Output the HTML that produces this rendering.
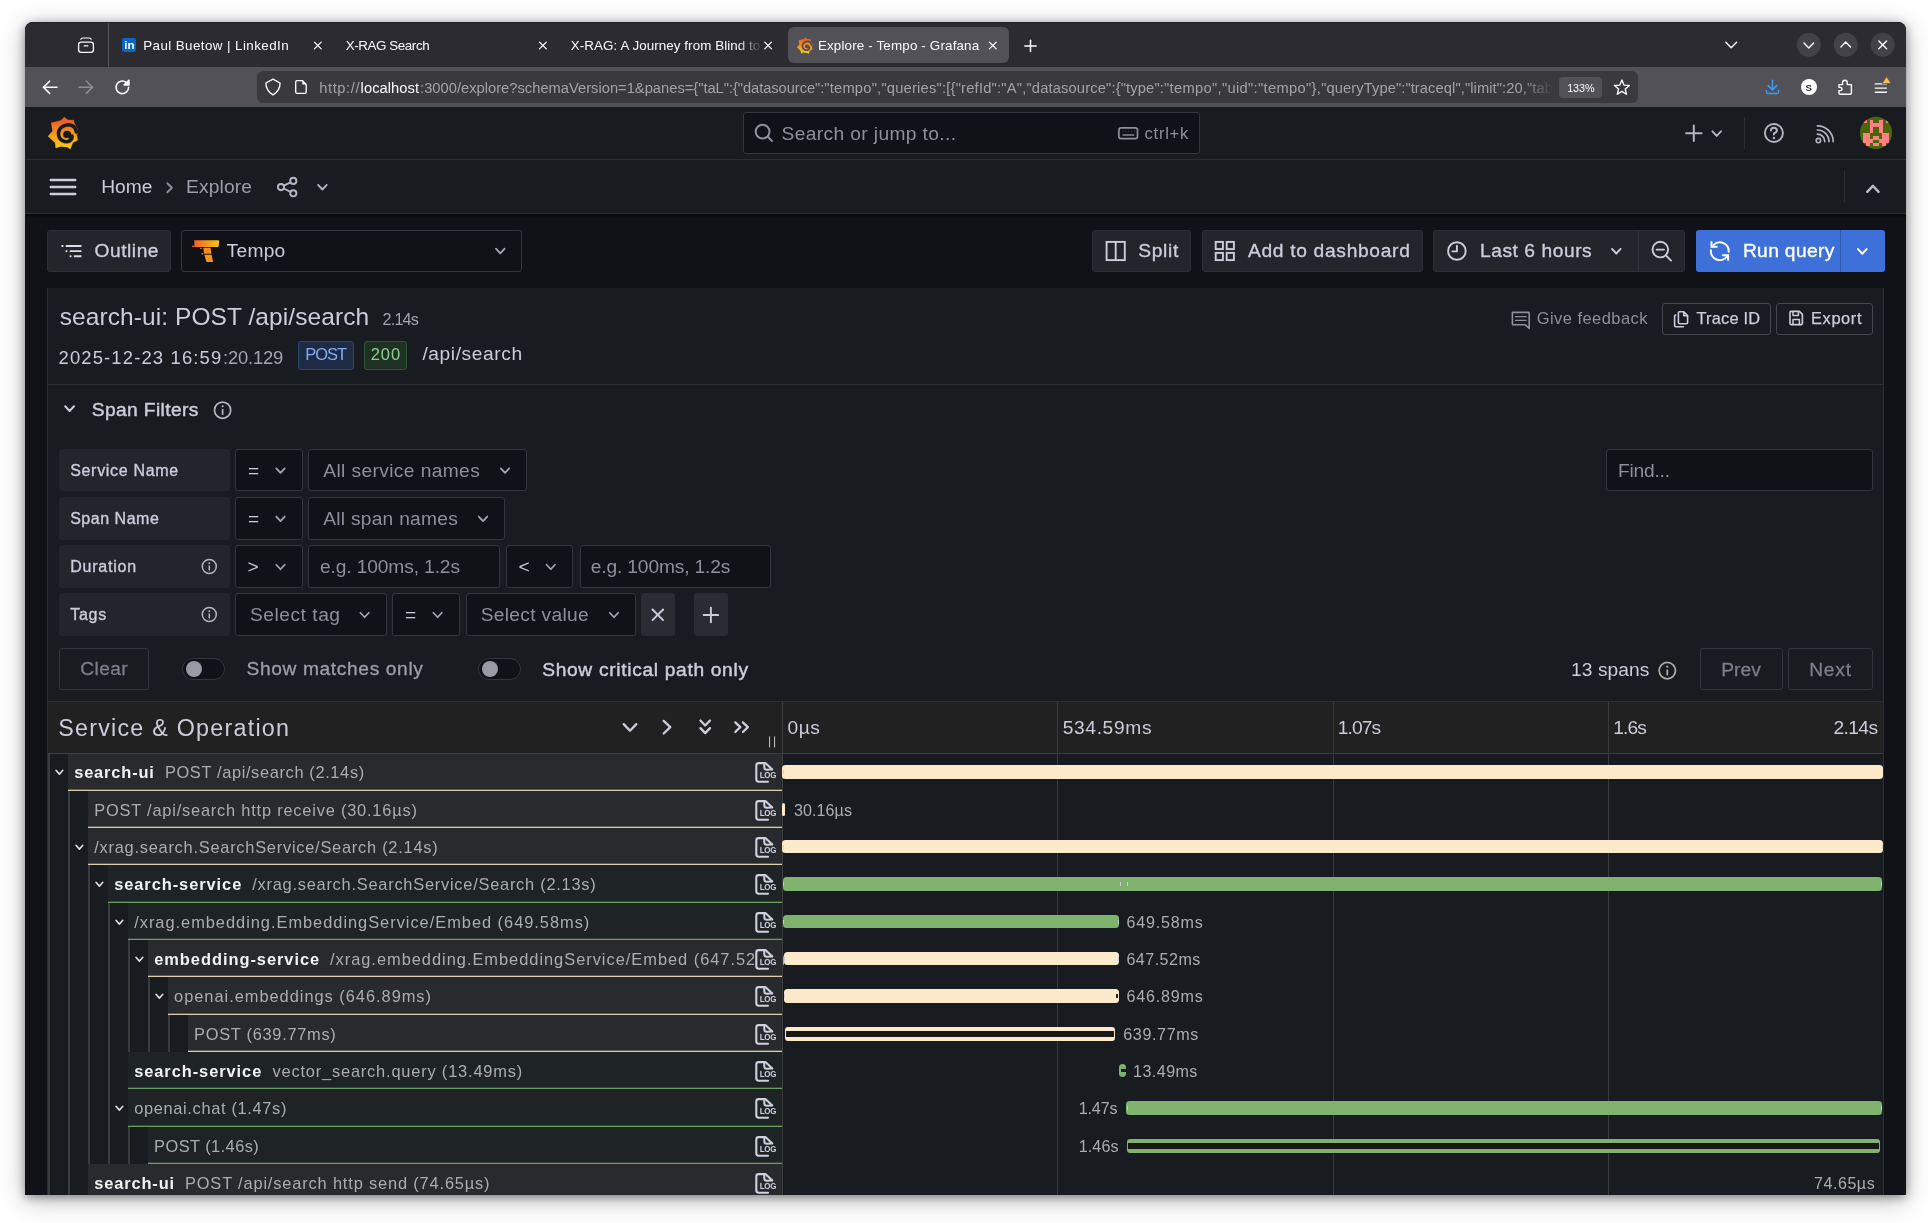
<!DOCTYPE html>
<html lang="en"><head><meta charset="utf-8"><title>Explore - Tempo - Grafana</title>
<style>
html,body{margin:0;padding:0;background:#fff;}
body{width:1931px;height:1223px;overflow:hidden;position:relative;font-family:"Liberation Sans", sans-serif;}
#win{position:absolute;left:25px;top:22px;width:1881px;height:1173px;border-radius:8px 8px 0 0;overflow:hidden;background:#111217;box-shadow:0 2px 10px rgba(0,0,0,0.38), 0 5px 26px rgba(0,0,0,0.28);}
#in{position:absolute;left:-25px;top:-22px;width:1931px;height:1223px;will-change:transform;}
#in div{position:absolute;box-sizing:border-box;}
#in span{position:absolute;white-space:pre;line-height:1;}
#ov{position:absolute;left:0;top:0;}
</style></head><body>
<div id="win"><div id="in">
<div style="left:25px;top:22px;width:1881px;height:45px;background:#2c2b32;"></div>
<div style="left:25px;top:22px;width:1881px;height:1px;background:#222126;"></div>
<div style="left:108px;top:23px;width:1px;height:44px;background:#55545b;"></div>
<div style="left:122px;top:38px;width:14px;height:14px;background:#0a66c2;border-radius:2px;"></div>
<span id="t0" style="top:40.07px;font-size:11.5px;color:#ffffff;left:124.2px;font-weight:700;letter-spacing:0.066px;">in</span>
<span id="t1" style="top:38.66px;font-size:13.4px;color:#fbfbfe;left:143.2px;letter-spacing:0.413px;">Paul Buetow | LinkedIn</span>
<span id="t2" style="top:38.66px;font-size:13.4px;color:#fbfbfe;left:345.8px;letter-spacing:-0.433px;">X-RAG Search</span>
<span id="t3" style="top:38.66px;font-size:13.4px;color:#fbfbfe;left:570.8px;letter-spacing:0.067px;">X-RAG: A Journey from Blind to</span>
<div style="left:738px;top:30px;width:24px;height:30px;background:linear-gradient(90deg,rgba(44,43,50,0),#2c2b32);"></div>
<div style="left:788px;top:27px;width:221px;height:36px;background:#525157;border-radius:6px;"></div>
<span id="t4" style="top:38.66px;font-size:13.4px;color:#fbfbfe;left:817.9px;letter-spacing:0.156px;">Explore - Tempo - Grafana</span>
<div style="left:25px;top:67px;width:1881px;height:40px;background:#525157;"></div>
<div style="left:257px;top:71px;width:1381px;height:32px;background:#3a3a3d;border-radius:6px;"></div>
<span id="t5" style="top:81.26px;font-size:14.7px;color:#a3a3a6;left:319.3px;letter-spacing:0.575px;">http://</span>
<span id="t6" style="top:81.26px;font-size:14.7px;color:#fbfbfe;left:360.6px;letter-spacing:0.054px;">localhost</span>
<span id="t7" style="top:81.26px;font-size:14.7px;color:#a3a3a6;left:420.1px;letter-spacing:0.015px;">:3000/explore?schemaVersion=1&amp;panes={</span>
<span id="t8" style="top:81.26px;font-size:14.7px;color:#a3a3a6;left:698.3px;letter-spacing:-0.051px;">"taL":{"datasource":</span>
<span id="t9" style="top:81.26px;font-size:14.7px;color:#a3a3a6;left:824.3px;letter-spacing:0.219px;">"tempo","queries":[{"refId":"A",</span>
<span id="t10" style="top:81.26px;font-size:14.7px;color:#a3a3a6;left:1026.5px;letter-spacing:0.150px;">"datasource":{"type":</span>
<span id="t11" style="top:81.26px;font-size:14.7px;color:#a3a3a6;left:1164px;letter-spacing:0.327px;">"tempo","uid":"tempo"},</span>
<span id="t12" style="top:81.26px;font-size:14.7px;color:#a3a3a6;left:1321.2px;letter-spacing:0.093px;">"queryType":"traceql","limit":20,"tab</span>
<div style="left:1520px;top:73px;width:34px;height:28px;background:linear-gradient(90deg,rgba(58,58,61,0),#3a3a3d);"></div>
<div style="left:1559px;top:77px;width:43px;height:20.6px;background:#525157;border-radius:4px;"></div>
<span id="t13" style="top:82.56px;font-size:10.8px;color:#fbfbfe;left:1567.2px;letter-spacing:-0.108px;">133%</span>
<div style="left:1800.9px;top:79.4px;width:15.8px;height:15.8px;background:#ffffff;border-radius:50%;"></div>
<span id="t14" style="top:82.57px;font-size:9.6px;color:#2b2a33;left:1805.6px;font-weight:700;">S</span>
<div style="left:25px;top:107px;width:1881px;height:53px;background:#181b1f;"></div>
<div style="left:25px;top:159px;width:1881px;height:1px;background:#2c2e34;"></div>
<div style="left:25px;top:160px;width:1881px;height:54px;background:#181b1f;"></div>
<div style="left:25px;top:213px;width:1881px;height:1px;background:#2c2e34;"></div>
<div style="left:25px;top:214px;width:1881px;height:981px;background:#111217;"></div>
<div style="left:25px;top:214px;width:1881px;height:5px;background:linear-gradient(180deg,rgba(0,0,0,0.55),rgba(0,0,0,0));"></div>
<div style="left:743px;top:112px;width:457px;height:41.5px;background:#111217;border:1px solid #34363d;border-radius:3px;"></div>
<span id="t15" style="top:123.55px;font-size:19.2px;color:#8e8f9b;left:781.6px;letter-spacing:0.372px;">Search or jump to...</span>
<span id="t16" style="top:124.83px;font-size:16.5px;color:#8e8f9b;left:1144.6px;letter-spacing:0.742px;">ctrl+k</span>
<div style="left:1744px;top:117px;width:1px;height:32px;background:#2c2e34;"></div>
<span id="t17" style="top:176.85px;font-size:19.2px;color:#ccccdc;left:101.2px;letter-spacing:0.037px;">Home</span>
<span id="t18" style="top:176.85px;font-size:19.2px;color:#9d9eab;left:186px;letter-spacing:0.156px;">Explore</span>
<div style="left:1844px;top:171px;width:1px;height:32px;background:#2c2e34;"></div>
<div style="left:47px;top:230px;width:124px;height:42px;background:#24252b;border:1px solid #2e2f36;border-radius:3px;"></div>
<span id="t19" style="top:240.85px;font-size:19.2px;color:#ccccdc;left:94.6px;-webkit-text-stroke:0.35px #ccccdc;letter-spacing:0.517px;">Outline</span>
<div style="left:181px;top:230px;width:341px;height:42px;background:#111217;border:1px solid #34363d;border-radius:3px;"></div>
<span id="t20" style="top:241.05px;font-size:19.2px;color:#ccccdc;left:226.6px;letter-spacing:0.277px;">Tempo</span>
<div style="left:1092px;top:230px;width:99px;height:42px;background:#24252b;border:1px solid #2e2f36;border-radius:3px;"></div>
<span id="t21" style="top:240.85px;font-size:19.2px;color:#ccccdc;left:1138.3px;-webkit-text-stroke:0.35px #ccccdc;letter-spacing:0.668px;">Split</span>
<div style="left:1202px;top:230px;width:221px;height:42px;background:#24252b;border:1px solid #2e2f36;border-radius:3px;"></div>
<span id="t22" style="top:240.85px;font-size:19.2px;color:#ccccdc;left:1247.9px;-webkit-text-stroke:0.35px #ccccdc;letter-spacing:0.700px;">Add to dashboard</span>
<div style="left:1433px;top:230px;width:252px;height:42px;background:#24252b;border:1px solid #2e2f36;border-radius:3px;"></div>
<div style="left:1638px;top:231px;width:1px;height:40px;background:#34353c;"></div>
<span id="t23" style="top:240.85px;font-size:19.2px;color:#ccccdc;left:1480px;-webkit-text-stroke:0.35px #ccccdc;letter-spacing:0.554px;">Last 6 hours</span>
<div style="left:1696px;top:230px;width:144px;height:42px;background:#3d71d9;border-radius:3px 0 0 3px;"></div>
<div style="left:1841px;top:230px;width:44px;height:42px;background:#3d71d9;border-radius:0 3px 3px 0;"></div>
<div style="left:1840px;top:230px;width:1px;height:42px;background:#2f5bb3;"></div>
<span id="t24" style="top:240.85px;font-size:19.2px;color:#ffffff;left:1742.9px;-webkit-text-stroke:0.35px #ffffff;letter-spacing:0.359px;">Run query</span>
<div style="left:47px;top:288px;width:1837px;height:907px;background:#181b1f;border-left:1px solid #2b2d32;border-right:1px solid #2b2d32;"></div>
<span id="t25" style="top:304.96px;font-size:24.5px;color:#ccccdc;left:59.7px;letter-spacing:0.081px;">search-ui: POST /api/search</span>
<span id="t26" style="top:311.49px;font-size:16.2px;color:#a3a4b1;left:382.6px;letter-spacing:-0.827px;">2.14s</span>
<span id="t27" style="top:348.62px;font-size:18.4px;color:#ccccdc;left:58.5px;letter-spacing:1.165px;">2025-12-23 16:59</span>
<span id="t28" style="top:348.62px;font-size:18.4px;color:#a3a4b1;left:223.1px;letter-spacing:-0.210px;">:20.129</span>
<div style="left:298px;top:341px;width:56px;height:29px;background:#1d2b45;border:1px solid #2c4878;border-radius:3px;"></div>
<span id="t29" style="top:345.93px;font-size:16.5px;color:#86adf0;left:305.3px;letter-spacing:-1.079px;">POST</span>
<div style="left:364px;top:341px;width:43px;height:29px;background:#1e3123;border:1px solid #2f5634;border-radius:3px;"></div>
<span id="t30" style="top:345.93px;font-size:16.5px;color:#8ccf8e;left:370.7px;letter-spacing:0.934px;">200</span>
<span id="t31" style="top:343.65px;font-size:19.2px;color:#ccccdc;left:422.4px;letter-spacing:0.584px;">/api/search</span>
<span id="t32" style="top:310.03px;font-size:16.5px;color:#8e8f9b;left:1536.7px;letter-spacing:0.443px;">Give feedback</span>
<div style="left:1662px;top:303px;width:109px;height:31.6px;background:transparent;border:1px solid #44464e;border-radius:3px;"></div>
<span id="t33" style="top:310.32px;font-size:16.4px;color:#ccccdc;left:1696.4px;-webkit-text-stroke:0.25px #ccccdc;letter-spacing:0.209px;">Trace ID</span>
<div style="left:1776px;top:303px;width:97px;height:31.6px;background:transparent;border:1px solid #44464e;border-radius:3px;"></div>
<span id="t34" style="top:310.32px;font-size:16.4px;color:#ccccdc;left:1811px;-webkit-text-stroke:0.25px #ccccdc;letter-spacing:0.625px;">Export</span>
<div style="left:48px;top:384px;width:1835px;height:1px;background:#2c2e34;"></div>
<span id="t35" style="top:399.85px;font-size:19.2px;color:#ccccdc;left:91.7px;-webkit-text-stroke:0.45px #ccccdc;letter-spacing:0.393px;">Span Filters</span>
<div style="left:59px;top:449px;width:171px;height:42.4px;background:#22252b;border-radius:3px;"></div>
<span id="t36" style="top:462.66px;font-size:16.0px;color:#ccccdc;left:70.2px;-webkit-text-stroke:0.35px #ccccdc;letter-spacing:0.683px;">Service Name</span>
<div style="left:235.4px;top:449px;width:67.3px;height:42.4px;background:#111217;border:1px solid #34363d;border-radius:3px;"></div>
<span id="t37" style="top:460.55px;font-size:19.2px;color:#ccccdc;left:248px;">=</span>
<div style="left:308.4px;top:449px;width:218.3px;height:42.4px;background:#111217;border:1px solid #34363d;border-radius:3px;"></div>
<span id="t38" style="top:460.55px;font-size:19.2px;color:#8e8f9b;left:323.2px;letter-spacing:0.390px;">All service names</span>
<div style="left:1606px;top:449px;width:267px;height:42.4px;background:#111217;border:1px solid #34363d;border-radius:3px;"></div>
<span id="t39" style="top:460.55px;font-size:19.2px;color:#8e8f9b;left:1618px;letter-spacing:-0.221px;">Find...</span>
<div style="left:59px;top:497.2px;width:171px;height:42.4px;background:#22252b;border-radius:3px;"></div>
<span id="t40" style="top:510.86px;font-size:16.0px;color:#ccccdc;left:70.2px;-webkit-text-stroke:0.35px #ccccdc;letter-spacing:0.512px;">Span Name</span>
<div style="left:235.4px;top:497.2px;width:67.3px;height:42.4px;background:#111217;border:1px solid #34363d;border-radius:3px;"></div>
<span id="t41" style="top:508.75px;font-size:19.2px;color:#ccccdc;left:248px;">=</span>
<div style="left:308.4px;top:497.2px;width:196.3px;height:42.4px;background:#111217;border:1px solid #34363d;border-radius:3px;"></div>
<span id="t42" style="top:508.75px;font-size:19.2px;color:#8e8f9b;left:323.2px;letter-spacing:0.262px;">All span names</span>
<div style="left:59px;top:545.4px;width:171px;height:42.4px;background:#22252b;border-radius:3px;"></div>
<span id="t43" style="top:559.06px;font-size:16.0px;color:#ccccdc;left:70.2px;-webkit-text-stroke:0.35px #ccccdc;letter-spacing:0.788px;">Duration</span>
<div style="left:235.4px;top:545.4px;width:67.3px;height:42.4px;background:#111217;border:1px solid #34363d;border-radius:3px;"></div>
<span id="t44" style="top:556.95px;font-size:19.2px;color:#ccccdc;left:247.6px;">&gt;</span>
<div style="left:308.4px;top:545.4px;width:191.4px;height:42.4px;background:#111217;border:1px solid #34363d;border-radius:3px;"></div>
<span id="t45" style="top:556.95px;font-size:19.2px;color:#8e8f9b;left:320px;letter-spacing:-0.124px;">e.g. 100ms, 1.2s</span>
<div style="left:506.2px;top:545.4px;width:66.7px;height:42.4px;background:#111217;border:1px solid #34363d;border-radius:3px;"></div>
<span id="t46" style="top:556.95px;font-size:19.2px;color:#ccccdc;left:518.6px;">&lt;</span>
<div style="left:579.5px;top:545.4px;width:191.4px;height:42.4px;background:#111217;border:1px solid #34363d;border-radius:3px;"></div>
<span id="t47" style="top:556.95px;font-size:19.2px;color:#8e8f9b;left:590.8px;letter-spacing:-0.157px;">e.g. 100ms, 1.2s</span>
<div style="left:59px;top:593.4px;width:171px;height:42.4px;background:#22252b;border-radius:3px;"></div>
<span id="t48" style="top:607.06px;font-size:16.0px;color:#ccccdc;left:70.2px;-webkit-text-stroke:0.35px #ccccdc;letter-spacing:0.734px;">Tags</span>
<div style="left:235.4px;top:593.4px;width:151.4px;height:42.4px;background:#111217;border:1px solid #34363d;border-radius:3px;"></div>
<span id="t49" style="top:604.95px;font-size:19.2px;color:#8e8f9b;left:250px;letter-spacing:0.517px;">Select tag</span>
<div style="left:392.1px;top:593.4px;width:67.6px;height:42.4px;background:#111217;border:1px solid #34363d;border-radius:3px;"></div>
<span id="t50" style="top:604.95px;font-size:19.2px;color:#ccccdc;left:405px;">=</span>
<div style="left:465.5px;top:593.4px;width:170.3px;height:42.4px;background:#111217;border:1px solid #34363d;border-radius:3px;"></div>
<span id="t51" style="top:604.95px;font-size:19.2px;color:#8e8f9b;left:480.7px;letter-spacing:0.315px;">Select value</span>
<div style="left:641px;top:593.4px;width:34.2px;height:42.4px;background:#2a2c33;border-radius:3px;"></div>
<div style="left:694.2px;top:593.4px;width:34.2px;height:42.4px;background:#2a2c33;border-radius:3px;"></div>
<div style="left:59.3px;top:648px;width:89.5px;height:41.6px;background:transparent;border:1px solid #33353c;border-radius:3px;"></div>
<span id="t52" style="top:659.25px;font-size:19.2px;color:#7d7e8a;left:80.3px;-webkit-text-stroke:0.3px #7d7e8a;letter-spacing:0.360px;">Clear</span>
<div style="left:182.3px;top:658.3px;width:42.6px;height:21.3px;background:#111217;border:1px solid #34363d;border-radius:11px;"></div>
<div style="left:185.60000000000002px;top:660.9px;width:16px;height:16px;background:#9a9aa6;border-radius:50%;"></div>
<span id="t53" style="top:659.05px;font-size:19.2px;color:#9b9ca8;left:246.5px;-webkit-text-stroke:0.35px #9b9ca8;letter-spacing:0.627px;">Show matches only</span>
<div style="left:478.2px;top:658.3px;width:42.6px;height:21.3px;background:#111217;border:1px solid #34363d;border-radius:11px;"></div>
<div style="left:481.5px;top:660.9px;width:16px;height:16px;background:#9a9aa6;border-radius:50%;"></div>
<span id="t54" style="top:659.65px;font-size:19.2px;color:#ccccdc;left:542.2px;-webkit-text-stroke:0.45px #ccccdc;letter-spacing:0.677px;">Show critical path only</span>
<span id="t55" style="top:659.95px;font-size:19.2px;color:#ccccdc;left:1571px;letter-spacing:0.075px;">13 spans</span>
<div style="left:1700.3px;top:648px;width:82.5px;height:41.6px;background:transparent;border:1px solid #33353c;border-radius:3px;"></div>
<span id="t56" style="top:659.75px;font-size:19.2px;color:#7d7e8a;left:1721.2px;-webkit-text-stroke:0.3px #7d7e8a;letter-spacing:0.049px;">Prev</span>
<div style="left:1788.3px;top:648px;width:84.7px;height:41.6px;background:transparent;border:1px solid #33353c;border-radius:3px;"></div>
<span id="t57" style="top:659.75px;font-size:19.2px;color:#7d7e8a;left:1809.2px;-webkit-text-stroke:0.3px #7d7e8a;letter-spacing:0.782px;">Next</span>
<div style="left:48px;top:701px;width:1835px;height:1px;background:#2c2e34;"></div>
<div style="left:48px;top:702px;width:1835px;height:51.5px;background:#212122;"></div>
<div style="left:48px;top:753px;width:1835px;height:1px;background:#3d3d3e;"></div>
<span id="t58" style="top:716.78px;font-size:23.3px;color:#ccccdc;left:58.2px;letter-spacing:1.240px;">Service &amp; Operation</span>
<span id="t59" style="top:717.65px;font-size:19.2px;color:#ccccdc;left:787.5px;letter-spacing:0.486px;">0µs</span>
<span id="t60" style="top:717.65px;font-size:19.2px;color:#ccccdc;left:1062.7px;letter-spacing:0.648px;">534.59ms</span>
<span id="t61" style="top:717.65px;font-size:19.2px;color:#ccccdc;left:1337.7px;letter-spacing:-0.863px;">1.07s</span>
<span id="t62" style="top:717.65px;font-size:19.2px;color:#ccccdc;left:1613.3px;letter-spacing:-0.894px;">1.6s</span>
<span id="t63" style="top:717.65px;font-size:19.2px;color:#ccccdc;left:1833.40px;letter-spacing:-0.588px;">2.14s</span>
<div style="left:68px;top:753px;width:714px;height:38px;background:#292a2d;"></div>
<span id="t64" style="top:764.02px;font-size:16.4px;color:#f2f2f2;left:74.2px;font-weight:700;letter-spacing:0.851px;">search-ui</span>
<span id="t65" style="top:764.02px;font-size:16.4px;color:#adadad;left:164.9px;letter-spacing:0.637px;">POST /api/search (2.14s)</span>
<div style="left:753.5px;top:753px;width:28.5px;height:38px;background:#292a2d;"></div>
<div style="left:68px;top:789px;width:714px;height:1px;background:#fceaca;opacity:0.26;"></div>
<div style="left:68px;top:790px;width:714px;height:1px;background:#fceaca;opacity:0.85;"></div>
<span id="t66" style="top:771.83px;font-size:8.0px;color:#cfd0e0;left:759.8px;font-weight:700;letter-spacing:-0.372px;transform:scaleY(1.1);transform-origin:0 85%;">LOG</span>
<div style="left:48px;top:753px;width:2px;height:38px;background:#3b3b3b;"></div>
<div style="left:88px;top:791px;width:694px;height:37px;background:#292a2d;"></div>
<span id="t67" style="top:802.02px;font-size:16.4px;color:#adadad;left:94.2px;letter-spacing:0.795px;">POST /api/search http receive (30.16µs)</span>
<div style="left:753.5px;top:791px;width:28.5px;height:37px;background:#292a2d;"></div>
<div style="left:88px;top:826px;width:694px;height:1px;background:#fceaca;opacity:0.26;"></div>
<div style="left:88px;top:827px;width:694px;height:1px;background:#fceaca;opacity:0.85;"></div>
<span id="t68" style="top:809.83px;font-size:8.0px;color:#cfd0e0;left:759.8px;font-weight:700;letter-spacing:-0.372px;transform:scaleY(1.1);transform-origin:0 85%;">LOG</span>
<div style="left:48px;top:791px;width:2px;height:37px;background:#3b3b3b;"></div>
<div style="left:68px;top:791px;width:2px;height:37px;background:#3b3b3b;"></div>
<div style="left:88px;top:828px;width:694px;height:37px;background:#292a2d;"></div>
<span id="t69" style="top:839.02px;font-size:16.4px;color:#adadad;left:94.2px;letter-spacing:0.753px;">/xrag.search.SearchService/Search (2.14s)</span>
<div style="left:753.5px;top:828px;width:28.5px;height:37px;background:#292a2d;"></div>
<div style="left:88px;top:863px;width:694px;height:1px;background:#fceaca;opacity:0.26;"></div>
<div style="left:88px;top:864px;width:694px;height:1px;background:#fceaca;opacity:0.85;"></div>
<span id="t70" style="top:846.83px;font-size:8.0px;color:#cfd0e0;left:759.8px;font-weight:700;letter-spacing:-0.372px;transform:scaleY(1.1);transform-origin:0 85%;">LOG</span>
<div style="left:48px;top:828px;width:2px;height:37px;background:#3b3b3b;"></div>
<div style="left:68px;top:828px;width:2px;height:37px;background:#3b3b3b;"></div>
<div style="left:108px;top:865px;width:674px;height:38px;background:#1e2326;"></div>
<span id="t71" style="top:876.02px;font-size:16.4px;color:#f2f2f2;left:114.2px;font-weight:700;letter-spacing:0.944px;">search-service</span>
<span id="t72" style="top:876.02px;font-size:16.4px;color:#adadad;left:252.2px;letter-spacing:0.755px;">/xrag.search.SearchService/Search (2.13s)</span>
<div style="left:753.5px;top:865px;width:28.5px;height:38px;background:#1e2326;"></div>
<div style="left:108px;top:901px;width:674px;height:1px;background:#7eb26d;opacity:0.26;"></div>
<div style="left:108px;top:902px;width:674px;height:1px;background:#7eb26d;opacity:0.85;"></div>
<span id="t73" style="top:883.83px;font-size:8.0px;color:#cfd0e0;left:759.8px;font-weight:700;letter-spacing:-0.372px;transform:scaleY(1.1);transform-origin:0 85%;">LOG</span>
<div style="left:48px;top:865px;width:2px;height:38px;background:#3b3b3b;"></div>
<div style="left:68px;top:865px;width:2px;height:38px;background:#3b3b3b;"></div>
<div style="left:88px;top:865px;width:2px;height:38px;background:#3b3b3b;"></div>
<div style="left:128px;top:903px;width:654px;height:37px;background:#1e2326;"></div>
<span id="t74" style="top:914.02px;font-size:16.4px;color:#adadad;left:134.2px;letter-spacing:0.978px;">/xrag.embedding.EmbeddingService/Embed (649.58ms)</span>
<div style="left:753.5px;top:903px;width:28.5px;height:37px;background:#1e2326;"></div>
<div style="left:128px;top:938px;width:654px;height:1px;background:#7eb26d;opacity:0.26;"></div>
<div style="left:128px;top:939px;width:654px;height:1px;background:#7eb26d;opacity:0.85;"></div>
<span id="t75" style="top:921.83px;font-size:8.0px;color:#cfd0e0;left:759.8px;font-weight:700;letter-spacing:-0.372px;transform:scaleY(1.1);transform-origin:0 85%;">LOG</span>
<div style="left:48px;top:903px;width:2px;height:37px;background:#3b3b3b;"></div>
<div style="left:68px;top:903px;width:2px;height:37px;background:#3b3b3b;"></div>
<div style="left:88px;top:903px;width:2px;height:37px;background:#3b3b3b;"></div>
<div style="left:108px;top:903px;width:2px;height:37px;background:#3b3b3b;"></div>
<div style="left:148px;top:940px;width:634px;height:37px;background:#292a2d;"></div>
<span id="t76" style="top:951.02px;font-size:16.4px;color:#f2f2f2;left:154.2px;font-weight:700;letter-spacing:0.976px;">embedding-service</span>
<span id="t77" style="top:951.02px;font-size:16.4px;color:#adadad;left:330px;letter-spacing:0.986px;">/xrag.embedding.EmbeddingService/Embed (647.52ms)</span>
<div style="left:753.5px;top:940px;width:28.5px;height:37px;background:#292a2d;"></div>
<div style="left:148px;top:975px;width:634px;height:1px;background:#fceaca;opacity:0.26;"></div>
<div style="left:148px;top:976px;width:634px;height:1px;background:#fceaca;opacity:0.85;"></div>
<span id="t78" style="top:958.83px;font-size:8.0px;color:#cfd0e0;left:759.8px;font-weight:700;letter-spacing:-0.372px;transform:scaleY(1.1);transform-origin:0 85%;">LOG</span>
<div style="left:48px;top:940px;width:2px;height:37px;background:#3b3b3b;"></div>
<div style="left:68px;top:940px;width:2px;height:37px;background:#3b3b3b;"></div>
<div style="left:88px;top:940px;width:2px;height:37px;background:#3b3b3b;"></div>
<div style="left:108px;top:940px;width:2px;height:37px;background:#3b3b3b;"></div>
<div style="left:128px;top:940px;width:2px;height:37px;background:#3b3b3b;"></div>
<div style="left:168px;top:977px;width:614px;height:38px;background:#292a2d;"></div>
<span id="t79" style="top:988.02px;font-size:16.4px;color:#adadad;left:174.1px;letter-spacing:0.977px;">openai.embeddings (646.89ms)</span>
<div style="left:753.5px;top:977px;width:28.5px;height:38px;background:#292a2d;"></div>
<div style="left:168px;top:1013px;width:614px;height:1px;background:#fceaca;opacity:0.26;"></div>
<div style="left:168px;top:1014px;width:614px;height:1px;background:#fceaca;opacity:0.85;"></div>
<span id="t80" style="top:995.83px;font-size:8.0px;color:#cfd0e0;left:759.8px;font-weight:700;letter-spacing:-0.372px;transform:scaleY(1.1);transform-origin:0 85%;">LOG</span>
<div style="left:48px;top:977px;width:2px;height:38px;background:#3b3b3b;"></div>
<div style="left:68px;top:977px;width:2px;height:38px;background:#3b3b3b;"></div>
<div style="left:88px;top:977px;width:2px;height:38px;background:#3b3b3b;"></div>
<div style="left:108px;top:977px;width:2px;height:38px;background:#3b3b3b;"></div>
<div style="left:128px;top:977px;width:2px;height:38px;background:#3b3b3b;"></div>
<div style="left:148px;top:977px;width:2px;height:38px;background:#3b3b3b;"></div>
<div style="left:188px;top:1015px;width:594px;height:37px;background:#292a2d;"></div>
<span id="t81" style="top:1026.02px;font-size:16.4px;color:#adadad;left:194.1px;letter-spacing:0.708px;">POST (639.77ms)</span>
<div style="left:753.5px;top:1015px;width:28.5px;height:37px;background:#292a2d;"></div>
<div style="left:188px;top:1050px;width:594px;height:1px;background:#fceaca;opacity:0.26;"></div>
<div style="left:188px;top:1051px;width:594px;height:1px;background:#fceaca;opacity:0.85;"></div>
<span id="t82" style="top:1033.83px;font-size:8.0px;color:#cfd0e0;left:759.8px;font-weight:700;letter-spacing:-0.372px;transform:scaleY(1.1);transform-origin:0 85%;">LOG</span>
<div style="left:48px;top:1015px;width:2px;height:37px;background:#3b3b3b;"></div>
<div style="left:68px;top:1015px;width:2px;height:37px;background:#3b3b3b;"></div>
<div style="left:88px;top:1015px;width:2px;height:37px;background:#3b3b3b;"></div>
<div style="left:108px;top:1015px;width:2px;height:37px;background:#3b3b3b;"></div>
<div style="left:128px;top:1015px;width:2px;height:37px;background:#3b3b3b;"></div>
<div style="left:148px;top:1015px;width:2px;height:37px;background:#3b3b3b;"></div>
<div style="left:168px;top:1015px;width:2px;height:37px;background:#3b3b3b;"></div>
<div style="left:128px;top:1052px;width:654px;height:37px;background:#1e2326;"></div>
<span id="t83" style="top:1063.02px;font-size:16.4px;color:#f2f2f2;left:134.2px;font-weight:700;letter-spacing:0.944px;">search-service</span>
<span id="t84" style="top:1063.02px;font-size:16.4px;color:#adadad;left:272.5px;letter-spacing:0.816px;">vector_search.query (13.49ms)</span>
<div style="left:753.5px;top:1052px;width:28.5px;height:37px;background:#1e2326;"></div>
<div style="left:128px;top:1087px;width:654px;height:1px;background:#7eb26d;opacity:0.26;"></div>
<div style="left:128px;top:1088px;width:654px;height:1px;background:#7eb26d;opacity:0.85;"></div>
<span id="t85" style="top:1070.83px;font-size:8.0px;color:#cfd0e0;left:759.8px;font-weight:700;letter-spacing:-0.372px;transform:scaleY(1.1);transform-origin:0 85%;">LOG</span>
<div style="left:48px;top:1052px;width:2px;height:37px;background:#3b3b3b;"></div>
<div style="left:68px;top:1052px;width:2px;height:37px;background:#3b3b3b;"></div>
<div style="left:88px;top:1052px;width:2px;height:37px;background:#3b3b3b;"></div>
<div style="left:108px;top:1052px;width:2px;height:37px;background:#3b3b3b;"></div>
<div style="left:128px;top:1089px;width:654px;height:38px;background:#1e2326;"></div>
<span id="t86" style="top:1100.02px;font-size:16.4px;color:#adadad;left:134.2px;letter-spacing:0.660px;">openai.chat (1.47s)</span>
<div style="left:753.5px;top:1089px;width:28.5px;height:38px;background:#1e2326;"></div>
<div style="left:128px;top:1125px;width:654px;height:1px;background:#7eb26d;opacity:0.26;"></div>
<div style="left:128px;top:1126px;width:654px;height:1px;background:#7eb26d;opacity:0.85;"></div>
<span id="t87" style="top:1107.83px;font-size:8.0px;color:#cfd0e0;left:759.8px;font-weight:700;letter-spacing:-0.372px;transform:scaleY(1.1);transform-origin:0 85%;">LOG</span>
<div style="left:48px;top:1089px;width:2px;height:38px;background:#3b3b3b;"></div>
<div style="left:68px;top:1089px;width:2px;height:38px;background:#3b3b3b;"></div>
<div style="left:88px;top:1089px;width:2px;height:38px;background:#3b3b3b;"></div>
<div style="left:108px;top:1089px;width:2px;height:38px;background:#3b3b3b;"></div>
<div style="left:148px;top:1127px;width:634px;height:37px;background:#1e2326;"></div>
<span id="t88" style="top:1138.02px;font-size:16.4px;color:#adadad;left:154.1px;letter-spacing:0.436px;">POST (1.46s)</span>
<div style="left:753.5px;top:1127px;width:28.5px;height:37px;background:#1e2326;"></div>
<div style="left:148px;top:1162px;width:634px;height:1px;background:#7eb26d;opacity:0.26;"></div>
<div style="left:148px;top:1163px;width:634px;height:1px;background:#7eb26d;opacity:0.85;"></div>
<span id="t89" style="top:1145.83px;font-size:8.0px;color:#cfd0e0;left:759.8px;font-weight:700;letter-spacing:-0.372px;transform:scaleY(1.1);transform-origin:0 85%;">LOG</span>
<div style="left:48px;top:1127px;width:2px;height:37px;background:#3b3b3b;"></div>
<div style="left:68px;top:1127px;width:2px;height:37px;background:#3b3b3b;"></div>
<div style="left:88px;top:1127px;width:2px;height:37px;background:#3b3b3b;"></div>
<div style="left:108px;top:1127px;width:2px;height:37px;background:#3b3b3b;"></div>
<div style="left:128px;top:1127px;width:2px;height:37px;background:#3b3b3b;"></div>
<div style="left:88px;top:1164px;width:694px;height:37px;background:#292a2d;"></div>
<span id="t90" style="top:1175.02px;font-size:16.4px;color:#f2f2f2;left:94.2px;font-weight:700;letter-spacing:0.876px;">search-ui</span>
<span id="t91" style="top:1175.02px;font-size:16.4px;color:#adadad;left:185px;letter-spacing:0.840px;">POST /api/search http send (74.65µs)</span>
<div style="left:753.5px;top:1164px;width:28.5px;height:37px;background:#292a2d;"></div>
<div style="left:88px;top:1199px;width:694px;height:1px;background:#fceaca;opacity:0.26;"></div>
<div style="left:88px;top:1200px;width:694px;height:1px;background:#fceaca;opacity:0.85;"></div>
<span id="t92" style="top:1182.83px;font-size:8.0px;color:#cfd0e0;left:759.8px;font-weight:700;letter-spacing:-0.372px;transform:scaleY(1.1);transform-origin:0 85%;">LOG</span>
<div style="left:48px;top:1164px;width:2px;height:37px;background:#3b3b3b;"></div>
<div style="left:68px;top:1164px;width:2px;height:37px;background:#3b3b3b;"></div>
<div style="left:48px;top:753px;width:1835px;height:1px;background:#3d3d3e;"></div>
<div style="left:1057.3px;top:702px;width:1px;height:493px;background:#3a3a3b;"></div>
<div style="left:1332.6px;top:702px;width:1px;height:493px;background:#3a3a3b;"></div>
<div style="left:1608.3px;top:702px;width:1px;height:493px;background:#3a3a3b;"></div>
<div style="left:782px;top:702px;width:1px;height:493px;background:#3d3d3e;"></div>
<div style="left:782.3px;top:765px;width:1100.9px;height:14px;background:#fceaca;border-radius:3.5px;"></div>
<div style="left:782.6px;top:770px;width:1.1px;height:4px;background:#c9cbe0;"></div>
<div style="left:782.3px;top:803px;width:2.7000000000000455px;height:13px;background:#fceaca;border-radius:3.5px;"></div>
<span id="t93" style="top:802.17px;font-size:16.1px;color:#adadad;left:793.9px;letter-spacing:0.084px;">30.16µs</span>
<div style="left:782.3px;top:840px;width:1100.5px;height:13px;background:#fceaca;border-radius:3.5px;"></div>
<div style="left:782.6px;top:845px;width:1.1px;height:4px;background:#c9cbe0;"></div>
<div style="left:1881.6px;top:845px;width:1.1px;height:4px;background:#c9cbe0;"></div>
<div style="left:783.2px;top:877px;width:1099.0px;height:14px;background:#7eb26d;border-radius:3.5px;"></div>
<div style="left:783.4px;top:882px;width:1.1px;height:4px;background:#c9cbe0;"></div>
<div style="left:1119.6px;top:882px;width:1.1px;height:4px;background:#c9cbe0;"></div>
<div style="left:1126.8px;top:882px;width:1.1px;height:4px;background:#c9cbe0;"></div>
<div style="left:1881.4px;top:882px;width:1.1px;height:4px;background:#c9cbe0;"></div>
<div style="left:783.2px;top:915px;width:335.79999999999995px;height:13px;background:#7eb26d;border-radius:3.5px;"></div>
<div style="left:783.4px;top:920px;width:1.1px;height:4px;background:#c9cbe0;"></div>
<div style="left:1118px;top:920px;width:1.1px;height:4px;background:#c9cbe0;"></div>
<span id="t94" style="top:914.17px;font-size:16.1px;color:#adadad;left:1126.4px;letter-spacing:0.816px;">649.58ms</span>
<div style="left:784.2px;top:952px;width:334.79999999999995px;height:13px;background:#fceaca;border-radius:3.5px;"></div>
<div style="left:784.4px;top:957px;width:1.1px;height:4px;background:#c9cbe0;"></div>
<div style="left:1118px;top:957px;width:1.1px;height:4px;background:#c9cbe0;"></div>
<span id="t95" style="top:951.17px;font-size:16.1px;color:#adadad;left:1126.4px;letter-spacing:0.473px;">647.52ms</span>
<div style="left:784.2px;top:989px;width:334.79999999999995px;height:14px;background:#fceaca;border-radius:3.5px;"></div>
<div style="left:784.4px;top:994px;width:1.1px;height:4px;background:#c9cbe0;"></div>
<span id="t96" style="top:988.17px;font-size:16.1px;color:#adadad;left:1126.4px;letter-spacing:0.816px;">646.89ms</span>
<div style="left:1116.4px;top:994px;width:1.3px;height:4px;background:#20242c;"></div>
<div style="left:785.2px;top:1027px;width:330.0px;height:13.5px;background:#181818;border-radius:3px;border:solid #fceaca;border-width:4.4px 1.2px 4.4px 1.2px;"></div>
<span id="t97" style="top:1026.17px;font-size:16.1px;color:#adadad;left:1123.2px;letter-spacing:0.645px;">639.77ms</span>
<div style="left:1119.2px;top:1064px;width:7.0px;height:13px;background:#7eb26d;border-radius:3.5px;"></div>
<div style="left:1121.4px;top:1069px;width:4.2px;height:3.4px;background:#1b1e22;"></div>
<span id="t98" style="top:1063.17px;font-size:16.1px;color:#adadad;left:1133.1px;letter-spacing:0.428px;">13.49ms</span>
<span id="t99" style="top:1100.17px;font-size:16.1px;color:#adadad;left:1078.7px;letter-spacing:-0.119px;">1.47s</span>
<div style="left:1126px;top:1101px;width:755.8px;height:14px;background:#7eb26d;border-radius:3.5px;"></div>
<div style="left:1126.6px;top:1106px;width:1.1px;height:4px;background:#c9cbe0;"></div>
<div style="left:1880.8px;top:1106px;width:1.1px;height:4px;background:#c9cbe0;"></div>
<span id="t100" style="top:1138.17px;font-size:16.1px;color:#adadad;left:1078.7px;letter-spacing:0.106px;">1.46s</span>
<div style="left:1127px;top:1139px;width:753px;height:13.5px;background:#181818;border-radius:3px;border:solid #7eb26d;border-width:4.4px 1.2px 4.4px 1.2px;"></div>
<span id="t101" style="top:1175.17px;font-size:16.1px;color:#adadad;left:1814.00px;letter-spacing:0.518px;">74.65µs</span>
<svg id="ov" width="1931" height="1223" viewBox="0 0 1931 1223">
<defs>
<linearGradient id="gg" gradientUnits="userSpaceOnUse" x1="0" y1="39.5" x2="0" y2="7"><stop offset="0" stop-color="#fbd016"/><stop offset="0.45" stop-color="#f79a1c"/><stop offset="1" stop-color="#ef4e28"/></linearGradient>
<linearGradient id="tg" x1="0" y1="0" x2="1" y2="0"><stop offset="0" stop-color="#f15f2a"/><stop offset="1" stop-color="#fbc80e"/></linearGradient>
<clipPath id="avc"><circle cx="1876" cy="132.9" r="16.1"/></clipPath>
</defs>
<rect x="78.6" y="42.2" width="14.8" height="10.2" rx="2.6" fill="none" stroke="#fbfbfe" stroke-width="1.3"/>
<path d="M80.8 39.2 Q81.2 38 82.6 38 L89.4 38 Q90.8 38 91.2 39.2" fill="none" stroke="#fbfbfe" stroke-width="1.2" stroke-linecap="round" stroke-linejoin="round" />
<line x1="84.2" y1="45.8" x2="87.8" y2="45.8" stroke="#fbfbfe" stroke-width="1.3" stroke-linecap="round"/>
<line x1="314.40000000000003" y1="42.1" x2="321.2" y2="48.9" stroke="#fbfbfe" stroke-width="1.3" stroke-linecap="round"/>
<line x1="314.40000000000003" y1="48.9" x2="321.2" y2="42.1" stroke="#fbfbfe" stroke-width="1.3" stroke-linecap="round"/>
<line x1="539.5" y1="42.1" x2="546.3" y2="48.9" stroke="#fbfbfe" stroke-width="1.3" stroke-linecap="round"/>
<line x1="539.5" y1="48.9" x2="546.3" y2="42.1" stroke="#fbfbfe" stroke-width="1.3" stroke-linecap="round"/>
<line x1="764.7" y1="42.1" x2="771.5" y2="48.9" stroke="#fbfbfe" stroke-width="1.3" stroke-linecap="round"/>
<line x1="764.7" y1="48.9" x2="771.5" y2="42.1" stroke="#fbfbfe" stroke-width="1.3" stroke-linecap="round"/>
<line x1="989.4" y1="42.1" x2="996.1999999999999" y2="48.9" stroke="#fbfbfe" stroke-width="1.3" stroke-linecap="round"/>
<line x1="989.4" y1="48.9" x2="996.1999999999999" y2="42.1" stroke="#fbfbfe" stroke-width="1.3" stroke-linecap="round"/>
<line x1="1024.8" y1="45.9" x2="1036.2" y2="45.9" stroke="#fbfbfe" stroke-width="1.5" stroke-linecap="round"/>
<line x1="1030.5" y1="40.199999999999996" x2="1030.5" y2="51.6" stroke="#fbfbfe" stroke-width="1.5" stroke-linecap="round"/>
<path d="M1725.8 42.2 L1731.2 47.8 L1736.6000000000001 42.2" fill="none" stroke="#fbfbfe" stroke-width="1.4" stroke-linecap="round" stroke-linejoin="round"/>
<circle cx="1808.8" cy="44.8" r="12" fill="#434249"/>
<circle cx="1845.7" cy="44.8" r="12" fill="#434249"/>
<circle cx="1882.7" cy="44.8" r="12" fill="#434249"/>
<path d="M1804.0 42.9 L1808.8 47.9 L1813.6 42.9" fill="none" stroke="#fbfbfe" stroke-width="1.4" stroke-linecap="round" stroke-linejoin="round"/>
<path d="M1840.9 47.1 L1845.7 42.1 L1850.5 47.1" fill="none" stroke="#fbfbfe" stroke-width="1.4" stroke-linecap="round" stroke-linejoin="round"/>
<line x1="1878.8" y1="40.9" x2="1886.6000000000001" y2="48.699999999999996" stroke="#fbfbfe" stroke-width="1.4" stroke-linecap="round"/>
<line x1="1878.8" y1="48.699999999999996" x2="1886.6000000000001" y2="40.9" stroke="#fbfbfe" stroke-width="1.4" stroke-linecap="round"/>
<line x1="43.6" y1="87.3" x2="57" y2="87.3" stroke="#fbfbfe" stroke-width="1.6" stroke-linecap="round"/>
<path d="M49.6 81.2 L43.5 87.3 L49.6 93.4" fill="none" stroke="#fbfbfe" stroke-width="1.6" stroke-linecap="round" stroke-linejoin="round"/>
<line x1="79" y1="87.3" x2="92.4" y2="87.3" stroke="#908f95" stroke-width="1.6" stroke-linecap="round"/>
<path d="M86.4 81.2 L92.5 87.3 L86.4 93.4" fill="none" stroke="#908f95" stroke-width="1.6" stroke-linecap="round" stroke-linejoin="round"/>
<path d="M128.6 87.3 A6.3 6.3 0 1 1 126.2 82.4" fill="none" stroke="#fbfbfe" stroke-width="1.6" stroke-linecap="round" stroke-linejoin="round" />
<path d="M128.9 80.2 L128.9 84.9 L124.2 84.9 Z" fill="#fbfbfe" stroke="#fbfbfe" stroke-width="1.6" stroke-linecap="round" stroke-linejoin="round"/>
<path d="M272.98 79.1 L280.05 83 Q280.2 90.6 272.98 94.95 Q265.8 90.6 265.95 83 Z" fill="none" stroke="#fbfbfe" stroke-width="1.35" stroke-linecap="round" stroke-linejoin="round" />
<path d="M297 80.6 L302.3 80.6 L306.2 84.5 L306.2 92 Q306.2 93.3 304.9 93.3 L297 93.3 Q295.7 93.3 295.7 92 L295.7 81.9 Q295.7 80.6 297 80.6 Z" fill="none" stroke="#fbfbfe" stroke-width="1.35" stroke-linecap="round" stroke-linejoin="round" />
<path d="M302.3 80.6 L302.3 84.5 L306.2 84.5 Z" fill="#fbfbfe"/>
<path d="M1621.9 80.0 L1623.96 85.07 L1629.41 85.46 L1625.23 88.98 L1626.54 94.29 L1621.9 91.4 L1617.26 94.29 L1618.57 88.98 L1614.39 85.46 L1619.84 85.07 Z" fill="none" stroke="#fbfbfe" stroke-width="1.35" stroke-linecap="round" stroke-linejoin="round"/>
<line x1="1772.5" y1="80.2" x2="1772.5" y2="89.6" stroke="#3a9bf7" stroke-width="1.5" stroke-linecap="round"/>
<path d="M1768.2 85.6 L1772.5 89.9 L1776.8 85.6" fill="none" stroke="#3a9bf7" stroke-width="1.5" stroke-linecap="round" stroke-linejoin="round"/>
<path d="M1766.4 90.4 L1766.4 92 Q1766.4 93.4 1767.8 93.4 L1777.2 93.4 Q1778.6 93.4 1778.6 92 L1778.6 90.4" fill="none" stroke="#3a9bf7" stroke-width="1.5" stroke-linecap="round" stroke-linejoin="round" />
<path d="M1839 84.6 L1842.6 84.6 L1842.6 82.6 Q1842.6 80.3 1844.9 80.3 Q1847.2 80.3 1847.2 82.6 L1847.2 84.6 L1851.4 84.6 L1851.4 93 Q1851.4 94.2 1850.2 94.2 L1840.2 94.2 Q1839 94.2 1839 93 L1839 90.6 Q1842 90.8 1842 88.9 Q1842 87.2 1839 87.3 Z" fill="none" stroke="#fbfbfe" stroke-width="1.4" stroke-linecap="round" stroke-linejoin="round" />
<line x1="1875.2" y1="83.9" x2="1886.4" y2="83.9" stroke="#fbfbfe" stroke-width="1.4" stroke-linecap="round"/>
<line x1="1875.2" y1="88.1" x2="1886.4" y2="88.1" stroke="#fbfbfe" stroke-width="1.4" stroke-linecap="round"/>
<line x1="1875.2" y1="92.3" x2="1886.4" y2="92.3" stroke="#fbfbfe" stroke-width="1.4" stroke-linecap="round"/>
<path d="M1886.6 76.6 L1891.2 83.6 L1882 83.6 Z" fill="#ffbd4f" stroke="#525157" stroke-width="0.8"/>
<g transform="translate(40 110) scale(1)"><path d="M24.27 6.96 L27.65 9.86 L33.86 10.23 L34.54 14.00 L37.06 18.43 L38.11 22.87 L36.68 24.83 L37.74 30.10 L32.81 32.66 L30.17 39.20 L27.92 37.17 L20.50 36.42 L15.73 37.92 L15.12 32.81 L7.98 26.34 L12.60 21.07 L11.21 12.72 L18.06 11.29 L21.07 10.23 Z" fill="url(#gg)" stroke="url(#gg)" stroke-width="0.3" stroke-linejoin="round"/><path d="M36.42 22.01 C36.21 21.41 35.73 19.41 35.18 18.43 C34.63 17.46 33.95 16.75 33.11 16.18 C32.26 15.60 31.20 15.16 30.10 14.97 C29.00 14.79 27.78 14.79 26.52 15.05 C25.27 15.31 23.70 15.86 22.57 16.55 C21.44 17.24 20.43 18.06 19.75 19.19 C19.07 20.32 18.54 21.88 18.51 23.33 C18.48 24.77 18.89 26.62 19.56 27.84 C20.24 29.06 21.44 30.02 22.57 30.66 C23.70 31.30 25.14 31.65 26.34 31.68 C27.53 31.71 28.81 31.36 29.72 30.85 C30.63 30.34 31.41 29.41 31.79 28.59 C32.17 27.78 31.95 26.40 31.98 25.96" fill="none" stroke="#181b1f" stroke-width="3.6" stroke-linecap="round"/><circle cx="27.16" cy="24.76" r="4.1" fill="#181b1f"/><path d="M28.22 28.29 L31.60 26.34" stroke="#181b1f" stroke-width="2.6" stroke-linecap="round"/><path d="M28.03 28.52 C27.68 28.61 26.62 29.09 25.96 29.04 C25.30 28.99 24.39 28.35 24.08 28.22" fill="none" stroke="url(#gg)" stroke-width="1.5" stroke-linecap="round"/></g>
<g transform="translate(792.9326732673268 33.7990099009901) scale(0.5148514851485149)"><path d="M24.27 6.96 L27.65 9.86 L33.86 10.23 L34.54 14.00 L37.06 18.43 L38.11 22.87 L36.68 24.83 L37.74 30.10 L32.81 32.66 L30.17 39.20 L27.92 37.17 L20.50 36.42 L15.73 37.92 L15.12 32.81 L7.98 26.34 L12.60 21.07 L11.21 12.72 L18.06 11.29 L21.07 10.23 Z" fill="url(#gg)" stroke="url(#gg)" stroke-width="0.3" stroke-linejoin="round"/><path d="M36.42 22.01 C36.21 21.41 35.73 19.41 35.18 18.43 C34.63 17.46 33.95 16.75 33.11 16.18 C32.26 15.60 31.20 15.16 30.10 14.97 C29.00 14.79 27.78 14.79 26.52 15.05 C25.27 15.31 23.70 15.86 22.57 16.55 C21.44 17.24 20.43 18.06 19.75 19.19 C19.07 20.32 18.54 21.88 18.51 23.33 C18.48 24.77 18.89 26.62 19.56 27.84 C20.24 29.06 21.44 30.02 22.57 30.66 C23.70 31.30 25.14 31.65 26.34 31.68 C27.53 31.71 28.81 31.36 29.72 30.85 C30.63 30.34 31.41 29.41 31.79 28.59 C32.17 27.78 31.95 26.40 31.98 25.96" fill="none" stroke="#525157" stroke-width="3.6" stroke-linecap="round"/><circle cx="27.16" cy="24.76" r="4.1" fill="#525157"/><path d="M28.22 28.29 L31.60 26.34" stroke="#525157" stroke-width="2.6" stroke-linecap="round"/><path d="M28.03 28.52 C27.68 28.61 26.62 29.09 25.96 29.04 C25.30 28.99 24.39 28.35 24.08 28.22" fill="none" stroke="url(#gg)" stroke-width="1.5" stroke-linecap="round"/></g>
<circle cx="762.6" cy="131.6" r="6.9" fill="none" stroke="#8e8f9b" stroke-width="2"/>
<line x1="767.8" y1="136.8" x2="772" y2="141" stroke="#8e8f9b" stroke-width="2" stroke-linecap="round"/>
<rect x="1118.9" y="127.8" width="18.6" height="10.8" rx="2.2" fill="none" stroke="#8e8f9b" stroke-width="1.7"/>
<line x1="1122.8" y1="131.4" x2="1123.1" y2="131.4" stroke="#8e8f9b" stroke-width="1.3" stroke-linecap="butt"/>
<line x1="1125.6" y1="131.4" x2="1125.8999999999999" y2="131.4" stroke="#8e8f9b" stroke-width="1.3" stroke-linecap="butt"/>
<line x1="1128.4" y1="131.4" x2="1128.7" y2="131.4" stroke="#8e8f9b" stroke-width="1.3" stroke-linecap="butt"/>
<line x1="1131.2" y1="131.4" x2="1131.5" y2="131.4" stroke="#8e8f9b" stroke-width="1.3" stroke-linecap="butt"/>
<line x1="1134" y1="131.4" x2="1134.3" y2="131.4" stroke="#8e8f9b" stroke-width="1.3" stroke-linecap="butt"/>
<line x1="1122.6" y1="135" x2="1134.2" y2="135" stroke="#8e8f9b" stroke-width="1.4" stroke-linecap="butt"/>
<line x1="1686.05" y1="133.3" x2="1701.55" y2="133.3" stroke="#b4b5c3" stroke-width="2" stroke-linecap="round"/>
<line x1="1693.8" y1="125.55000000000001" x2="1693.8" y2="141.05" stroke="#b4b5c3" stroke-width="2" stroke-linecap="round"/>
<path d="M1712.4 131.29999999999998 L1716.7 135.9 L1721.0 131.29999999999998" fill="none" stroke="#b4b5c3" stroke-width="1.9" stroke-linecap="round" stroke-linejoin="round"/>
<circle cx="1773.9" cy="133" r="9" fill="none" stroke="#b4b5c3" stroke-width="1.9"/>
<path d="M1770.9 130.6 Q1770.9 127.8 1773.9 127.8 Q1776.9 127.8 1776.9 130.4 Q1776.9 132.2 1773.9 133.4 L1773.9 134.6" fill="none" stroke="#b4b5c3" stroke-width="1.9" stroke-linecap="round" stroke-linejoin="round" />
<circle cx="1773.9" cy="138" r="1.2" fill="#b4b5c3"/>
<circle cx="1818.4" cy="140.6" r="2.2" fill="none" stroke="#b4b5c3" stroke-width="1.6"/>
<path d="M1817.4 134.2 A7.4 7.4 0 0 1 1824.8000000000002 141.6" fill="none" stroke="#b4b5c3" stroke-width="1.7" stroke-linecap="round" stroke-linejoin="round" />
<path d="M1817.4 130.0 A11.6 11.6 0 0 1 1829.0 141.6" fill="none" stroke="#b4b5c3" stroke-width="1.7" stroke-linecap="round" stroke-linejoin="round" />
<path d="M1817.4 125.8 A15.8 15.8 0 0 1 1833.2 141.6" fill="none" stroke="#b4b5c3" stroke-width="1.7" stroke-linecap="round" stroke-linejoin="round" />
<circle cx="1876" cy="132.9" r="16.1" fill="#4a650c"/>
<g fill="#ff8080" clip-path="url(#avc)"><rect x="1863.12" y="120.02" width="3.45" height="3.45" shape-rendering="crispEdges"/><rect x="1869.57" y="120.02" width="3.45" height="3.45" shape-rendering="crispEdges"/><rect x="1879.23" y="120.02" width="3.45" height="3.45" shape-rendering="crispEdges"/><rect x="1885.68" y="120.02" width="3.45" height="3.45" shape-rendering="crispEdges"/><rect x="1869.57" y="123.24" width="3.45" height="3.45" shape-rendering="crispEdges"/><rect x="1872.79" y="123.24" width="3.45" height="3.45" shape-rendering="crispEdges"/><rect x="1876.01" y="123.24" width="3.45" height="3.45" shape-rendering="crispEdges"/><rect x="1879.23" y="123.24" width="3.45" height="3.45" shape-rendering="crispEdges"/><rect x="1869.57" y="126.47" width="3.45" height="3.45" shape-rendering="crispEdges"/><rect x="1879.23" y="126.47" width="3.45" height="3.45" shape-rendering="crispEdges"/><rect x="1869.57" y="129.69" width="3.45" height="3.45" shape-rendering="crispEdges"/><rect x="1879.23" y="129.69" width="3.45" height="3.45" shape-rendering="crispEdges"/><rect x="1863.12" y="132.91" width="3.45" height="3.45" shape-rendering="crispEdges"/><rect x="1866.34" y="132.91" width="3.45" height="3.45" shape-rendering="crispEdges"/><rect x="1882.45" y="132.91" width="3.45" height="3.45" shape-rendering="crispEdges"/><rect x="1885.68" y="132.91" width="3.45" height="3.45" shape-rendering="crispEdges"/><rect x="1863.12" y="136.13" width="3.45" height="3.45" shape-rendering="crispEdges"/><rect x="1866.34" y="136.13" width="3.45" height="3.45" shape-rendering="crispEdges"/><rect x="1872.79" y="136.13" width="3.45" height="3.45" shape-rendering="crispEdges"/><rect x="1876.01" y="136.13" width="3.45" height="3.45" shape-rendering="crispEdges"/><rect x="1882.45" y="136.13" width="3.45" height="3.45" shape-rendering="crispEdges"/><rect x="1885.68" y="136.13" width="3.45" height="3.45" shape-rendering="crispEdges"/><rect x="1863.12" y="139.35" width="3.45" height="3.45" shape-rendering="crispEdges"/><rect x="1866.34" y="139.35" width="3.45" height="3.45" shape-rendering="crispEdges"/><rect x="1869.57" y="139.35" width="3.45" height="3.45" shape-rendering="crispEdges"/><rect x="1879.23" y="139.35" width="3.45" height="3.45" shape-rendering="crispEdges"/><rect x="1882.45" y="139.35" width="3.45" height="3.45" shape-rendering="crispEdges"/><rect x="1885.68" y="139.35" width="3.45" height="3.45" shape-rendering="crispEdges"/><rect x="1866.34" y="142.58" width="3.45" height="3.45" shape-rendering="crispEdges"/><rect x="1872.79" y="142.58" width="3.45" height="3.45" shape-rendering="crispEdges"/><rect x="1876.01" y="142.58" width="3.45" height="3.45" shape-rendering="crispEdges"/><rect x="1882.45" y="142.58" width="3.45" height="3.45" shape-rendering="crispEdges"/></g>
<line x1="50.8" y1="180.1" x2="75.2" y2="180.1" stroke="#ccccdc" stroke-width="2.5" stroke-linecap="round"/>
<line x1="50.8" y1="187.1" x2="75.2" y2="187.1" stroke="#ccccdc" stroke-width="2.5" stroke-linecap="round"/>
<line x1="50.8" y1="194.1" x2="75.2" y2="194.1" stroke="#ccccdc" stroke-width="2.5" stroke-linecap="round"/>
<path d="M167.29999999999998 183.3 L171.9 187.8 L167.29999999999998 192.3" fill="none" stroke="#8e8f9b" stroke-width="1.9" stroke-linecap="round" stroke-linejoin="round"/>
<circle cx="293.3" cy="180.9" r="3.1" fill="none" stroke="#b4b5c3" stroke-width="1.9"/>
<circle cx="281" cy="187.1" r="3.1" fill="none" stroke="#b4b5c3" stroke-width="1.9"/>
<circle cx="293.3" cy="193.3" r="3.1" fill="none" stroke="#b4b5c3" stroke-width="1.9"/>
<line x1="283.8" y1="185.7" x2="290.5" y2="182.3" stroke="#b4b5c3" stroke-width="1.9" stroke-linecap="round"/>
<line x1="283.8" y1="188.5" x2="290.5" y2="191.9" stroke="#b4b5c3" stroke-width="1.9" stroke-linecap="round"/>
<path d="M318.09999999999997 184.89999999999998 L322.4 189.5 L326.7 184.89999999999998" fill="none" stroke="#b4b5c3" stroke-width="1.9" stroke-linecap="round" stroke-linejoin="round"/>
<path d="M1867.2 191.8 L1872.9 185.8 L1878.6000000000001 191.8" fill="none" stroke="#b9bac8" stroke-width="2.4" stroke-linecap="round" stroke-linejoin="round"/>
<rect x="61.5" y="245.0" width="1.9" height="1.9" rx="0.4" fill="#dcdcec"/><rect x="65.7" y="245.0" width="15.8" height="1.9" rx="0.5" fill="#dcdcec"/>
<rect x="65.5" y="250.2" width="1.9" height="1.9" rx="0.4" fill="#dcdcec"/><rect x="69.7" y="250.2" width="11.8" height="1.9" rx="0.5" fill="#dcdcec"/>
<rect x="69.6" y="255.3" width="1.9" height="1.9" rx="0.4" fill="#dcdcec"/><rect x="73.8" y="255.3" width="7.7" height="1.9" rx="0.5" fill="#dcdcec"/>
<g><path fill="url(#tg)" d="M194.2 240.3 L218.2 240.3 Q219.2 240.3 219.1 241.3 L218.7 246 Q218.6 246.9 217.6 246.9 L194.4 246.9 L194.4 245.6 Z"/><rect x="192" y="245.7" width="2.4" height="1.2" fill="#f26a2a"/><rect x="199.9" y="247.9" width="2.2" height="0.9" fill="#f58220"/><rect x="201.6" y="253" width="1.6" height="1.4" fill="#f58220"/><path fill="#f68b1f" d="M203.3 247.8 L210.6 247.8 L211.4 253.8 L204.1 253.8 Z"/><path fill="#f7931e" d="M204.2 254.8 L211.6 254.8 L213.1 261.9 L206.5 261.9 Z"/></g>
<path d="M496.0 248.7 L500.3 253.3 L504.6 248.7" fill="none" stroke="#a3a4b1" stroke-width="1.9" stroke-linecap="round" stroke-linejoin="round"/>
<rect x="1106.6" y="241.9" width="18.2" height="18.2" fill="none" stroke="#ccccdc" stroke-width="1.9"/>
<line x1="1115.7" y1="242" x2="1115.7" y2="260" stroke="#ccccdc" stroke-width="1.9" stroke-linecap="butt"/>
<rect x="1215.7" y="241.9" width="7.2" height="7.2" fill="none" stroke="#ccccdc" stroke-width="1.9"/>
<rect x="1226.7" y="241.9" width="7.2" height="7.2" fill="none" stroke="#ccccdc" stroke-width="1.9"/>
<rect x="1215.7" y="252.9" width="7.2" height="7.2" fill="none" stroke="#ccccdc" stroke-width="1.9"/>
<rect x="1226.7" y="252.9" width="7.2" height="7.2" fill="none" stroke="#ccccdc" stroke-width="1.9"/>
<circle cx="1456.9" cy="251" r="8.8" fill="none" stroke="#ccccdc" stroke-width="1.9"/>
<path d="M1456.9 245.8 L1456.9 251.4 L1452.4 251.4" fill="none" stroke="#ccccdc" stroke-width="1.9" stroke-linecap="round" stroke-linejoin="round"/>
<path d="M1612.0 248.89999999999998 L1616.3 253.5 L1620.6 248.89999999999998" fill="none" stroke="#ccccdc" stroke-width="1.9" stroke-linecap="round" stroke-linejoin="round"/>
<circle cx="1660.3" cy="249.6" r="7.8" fill="none" stroke="#ccccdc" stroke-width="1.9"/>
<line x1="1666.1" y1="255.6" x2="1671" y2="260.6" stroke="#ccccdc" stroke-width="1.9" stroke-linecap="round"/>
<line x1="1656.6" y1="249.6" x2="1664" y2="249.6" stroke="#ccccdc" stroke-width="1.9" stroke-linecap="round"/>
<path d="M1713.64 244.85 A8.86 8.86 0 0 1 1728.71 251.7" fill="none" stroke="#ffffff" stroke-width="2" stroke-linecap="round" stroke-linejoin="round" />
<path d="M1711.5 241.2 L1711.5 246.8 L1717.5 246.8" fill="none" stroke="#ffffff" stroke-width="2" stroke-linecap="butt" stroke-linejoin="miter"/>
<path d="M1710.94 250.2 A8.86 8.86 0 0 0 1726.85 256.5" fill="none" stroke="#ffffff" stroke-width="2" stroke-linecap="round" stroke-linejoin="round" />
<path d="M1722.2 255.2 L1728.1 255.2 L1728.1 260.8" fill="none" stroke="#ffffff" stroke-width="2" stroke-linecap="butt" stroke-linejoin="miter"/>
<path d="M1858.0 249.1 L1862.3 253.70000000000002 L1866.6 249.1" fill="none" stroke="#ffffff" stroke-width="2" stroke-linecap="round" stroke-linejoin="round"/>
<path d="M1512.4 312.4 L1528.4 312.4 Q1529.2 312.4 1529.2 313.2 L1529.2 328.4 L1525.2 324.8 L1513.2 324.8 Q1512.4 324.8 1512.4 324 Z" fill="none" stroke="#8e8f9b" stroke-width="1.6" stroke-linecap="round" stroke-linejoin="round" />
<line x1="1515.6" y1="316.6" x2="1526" y2="316.6" stroke="#8e8f9b" stroke-width="1.4" stroke-linecap="round"/>
<line x1="1515.6" y1="320.4" x2="1526" y2="320.4" stroke="#8e8f9b" stroke-width="1.4" stroke-linecap="round"/>
<path d="M1679.4 311.8 L1683.8 311.8 L1687.6 315.6 L1687.6 322.6 Q1687.6 323.8 1686.4 323.8 L1679.6 323.8 Q1678.4 323.8 1678.4 322.6 L1678.4 313 Q1678.4 311.8 1679.4 311.8 Z M1683.8 312 L1683.8 315.8 L1687.6 315.8" fill="none" stroke="#ccccdc" stroke-width="1.6" stroke-linecap="round" stroke-linejoin="round" />
<path d="M1675.8 315 Q1674.6 315 1674.6 316.2 L1674.6 325.6 Q1674.6 326.8 1675.8 326.8 L1683.4 326.8" fill="none" stroke="#ccccdc" stroke-width="1.6" stroke-linecap="round" stroke-linejoin="round" />
<path d="M1791 311.4 L1799.4 311.4 L1802.4 314.4 L1802.4 323.6 Q1802.4 324.6 1801.4 324.6 L1791 324.6 Q1790 324.6 1790 323.6 L1790 312.4 Q1790 311.4 1791 311.4 Z" fill="none" stroke="#ccccdc" stroke-width="1.6" stroke-linecap="round" stroke-linejoin="round" />
<path d="M1793 311.8 L1793 315.4 L1798.4 315.4 L1798.4 311.8 M1793 324.4 L1793 319.6 L1799.4 319.6 L1799.4 324.4" fill="none" stroke="#ccccdc" stroke-width="1.5" stroke-linecap="round" stroke-linejoin="round" />
<path d="M65.19999999999999 406.20000000000005 L69.6 411.0 L74.0 406.20000000000005" fill="none" stroke="#ccccdc" stroke-width="2" stroke-linecap="round" stroke-linejoin="round"/>
<circle cx="222.6" cy="410.2" r="8.1" fill="none" stroke="#b4b5c3" stroke-width="1.7"/>
<line x1="222.6" y1="409.7" x2="222.6" y2="414.25" stroke="#b4b5c3" stroke-width="1.7" stroke-linecap="round"/>
<circle cx="222.6" cy="406.312" r="1.054" fill="#b4b5c3"/>
<path d="M276.3 468.35 L280.5 472.85 L284.7 468.35" fill="none" stroke="#a3a4b1" stroke-width="1.8" stroke-linecap="round" stroke-linejoin="round"/>
<path d="M500.8 468.35 L505 472.85 L509.2 468.35" fill="none" stroke="#a3a4b1" stroke-width="1.8" stroke-linecap="round" stroke-linejoin="round"/>
<path d="M276.3 516.55 L280.5 521.05 L284.7 516.55" fill="none" stroke="#a3a4b1" stroke-width="1.8" stroke-linecap="round" stroke-linejoin="round"/>
<path d="M478.8 516.55 L483 521.05 L487.2 516.55" fill="none" stroke="#a3a4b1" stroke-width="1.8" stroke-linecap="round" stroke-linejoin="round"/>
<circle cx="209.3" cy="566.5" r="7" fill="none" stroke="#b4b5c3" stroke-width="1.5"/>
<line x1="209.3" y1="566.0" x2="209.3" y2="570.0" stroke="#b4b5c3" stroke-width="1.5" stroke-linecap="round"/>
<circle cx="209.3" cy="563.14" r="0.9299999999999999" fill="#b4b5c3"/>
<path d="M276.3 564.75 L280.5 569.25 L284.7 564.75" fill="none" stroke="#a3a4b1" stroke-width="1.8" stroke-linecap="round" stroke-linejoin="round"/>
<path d="M546.5999999999999 564.75 L550.8 569.25 L555.0 564.75" fill="none" stroke="#a3a4b1" stroke-width="1.8" stroke-linecap="round" stroke-linejoin="round"/>
<circle cx="209.3" cy="614.5" r="7" fill="none" stroke="#b4b5c3" stroke-width="1.5"/>
<line x1="209.3" y1="614.0" x2="209.3" y2="618.0" stroke="#b4b5c3" stroke-width="1.5" stroke-linecap="round"/>
<circle cx="209.3" cy="611.14" r="0.9299999999999999" fill="#b4b5c3"/>
<path d="M360.40000000000003 612.75 L364.6 617.25 L368.8 612.75" fill="none" stroke="#a3a4b1" stroke-width="1.8" stroke-linecap="round" stroke-linejoin="round"/>
<path d="M433.40000000000003 612.75 L437.6 617.25 L441.8 612.75" fill="none" stroke="#a3a4b1" stroke-width="1.8" stroke-linecap="round" stroke-linejoin="round"/>
<path d="M609.8 612.75 L614 617.25 L618.2 612.75" fill="none" stroke="#a3a4b1" stroke-width="1.8" stroke-linecap="round" stroke-linejoin="round"/>
<line x1="652.5" y1="609.5" x2="663.0999999999999" y2="620.0999999999999" stroke="#ccccdc" stroke-width="1.9" stroke-linecap="round"/>
<line x1="652.5" y1="620.0999999999999" x2="663.0999999999999" y2="609.5" stroke="#ccccdc" stroke-width="1.9" stroke-linecap="round"/>
<line x1="703.6" y1="615.0" x2="718.1999999999999" y2="615.0" stroke="#ccccdc" stroke-width="1.9" stroke-linecap="round"/>
<line x1="710.9" y1="607.7" x2="710.9" y2="622.3" stroke="#ccccdc" stroke-width="1.9" stroke-linecap="round"/>
<circle cx="1667.3" cy="670.6" r="8.2" fill="none" stroke="#b0aca4" stroke-width="1.7"/>
<line x1="1667.3" y1="670.1" x2="1667.3" y2="674.7" stroke="#b0aca4" stroke-width="1.7" stroke-linecap="round"/>
<circle cx="1667.3" cy="666.664" r="1.054" fill="#b0aca4"/>
<path d="M623.7 724.1 L630 730.6999999999999 L636.3 724.1" fill="none" stroke="#ccccdc" stroke-width="2.3" stroke-linecap="round" stroke-linejoin="round"/>
<path d="M663.7 720.9000000000001 L670.3 727.2 L663.7 733.5" fill="none" stroke="#ccccdc" stroke-width="2.3" stroke-linecap="round" stroke-linejoin="round"/>
<path d="M700.4000000000001 720.5 L705.2 725.5 L710.0 720.5" fill="none" stroke="#ccccdc" stroke-width="2.3" stroke-linecap="round" stroke-linejoin="round"/>
<path d="M700.4000000000001 728.1 L705.2 733.1 L710.0 728.1" fill="none" stroke="#ccccdc" stroke-width="2.3" stroke-linecap="round" stroke-linejoin="round"/>
<path d="M735.3 722.4000000000001 L740.3 727.2 L735.3 732.0" fill="none" stroke="#ccccdc" stroke-width="2.3" stroke-linecap="round" stroke-linejoin="round"/>
<path d="M742.9 722.4000000000001 L747.9 727.2 L742.9 732.0" fill="none" stroke="#ccccdc" stroke-width="2.3" stroke-linecap="round" stroke-linejoin="round"/>
<line x1="769.6" y1="736.4" x2="769.6" y2="747.4" stroke="#c8c8c8" stroke-width="1" stroke-linecap="butt"/>
<line x1="774.6" y1="736.4" x2="774.6" y2="747.4" stroke="#c8c8c8" stroke-width="1" stroke-linecap="butt"/>
<path d="M768 781.6999999999999 L758.7 781.6999999999999 Q756.3 781.6999999999999 756.3 779.3 L756.3 765.5 Q756.3 763.0999999999999 758.7 763.0999999999999 L765.4 763.0999999999999 L772.3 769.5" fill="none" stroke="#cfd0e0" stroke-width="2.1" stroke-linecap="round" stroke-linejoin="round" />
<path d="M764.3 764.0 L764.3 767.1999999999999 Q764.3 769.6999999999999 766.9 769.6999999999999 L771.4 769.5" fill="none" stroke="#cfd0e0" stroke-width="2.0" stroke-linecap="round" stroke-linejoin="round" />
<path d="M56.0 770.3000000000001 L59.4 774.1 L62.8 770.3000000000001" fill="none" stroke="#dedede" stroke-width="1.6" stroke-linecap="round" stroke-linejoin="round"/>
<path d="M768 819.6999999999999 L758.7 819.6999999999999 Q756.3 819.6999999999999 756.3 817.3 L756.3 803.5 Q756.3 801.0999999999999 758.7 801.0999999999999 L765.4 801.0999999999999 L772.3 807.5" fill="none" stroke="#cfd0e0" stroke-width="2.1" stroke-linecap="round" stroke-linejoin="round" />
<path d="M764.3 802.0 L764.3 805.1999999999999 Q764.3 807.6999999999999 766.9 807.6999999999999 L771.4 807.5" fill="none" stroke="#cfd0e0" stroke-width="2.0" stroke-linecap="round" stroke-linejoin="round" />
<path d="M768 856.6999999999999 L758.7 856.6999999999999 Q756.3 856.6999999999999 756.3 854.3 L756.3 840.5 Q756.3 838.0999999999999 758.7 838.0999999999999 L765.4 838.0999999999999 L772.3 844.5" fill="none" stroke="#cfd0e0" stroke-width="2.1" stroke-linecap="round" stroke-linejoin="round" />
<path d="M764.3 839.0 L764.3 842.1999999999999 Q764.3 844.6999999999999 766.9 844.6999999999999 L771.4 844.5" fill="none" stroke="#cfd0e0" stroke-width="2.0" stroke-linecap="round" stroke-linejoin="round" />
<path d="M76.0 845.3000000000001 L79.4 849.1 L82.80000000000001 845.3000000000001" fill="none" stroke="#dedede" stroke-width="1.6" stroke-linecap="round" stroke-linejoin="round"/>
<path d="M768 893.6999999999999 L758.7 893.6999999999999 Q756.3 893.6999999999999 756.3 891.3 L756.3 877.5 Q756.3 875.0999999999999 758.7 875.0999999999999 L765.4 875.0999999999999 L772.3 881.5" fill="none" stroke="#cfd0e0" stroke-width="2.1" stroke-linecap="round" stroke-linejoin="round" />
<path d="M764.3 876.0 L764.3 879.1999999999999 Q764.3 881.6999999999999 766.9 881.6999999999999 L771.4 881.5" fill="none" stroke="#cfd0e0" stroke-width="2.0" stroke-linecap="round" stroke-linejoin="round" />
<path d="M96.0 882.3000000000001 L99.4 886.1 L102.80000000000001 882.3000000000001" fill="none" stroke="#dedede" stroke-width="1.6" stroke-linecap="round" stroke-linejoin="round"/>
<path d="M768 931.6999999999999 L758.7 931.6999999999999 Q756.3 931.6999999999999 756.3 929.3 L756.3 915.5 Q756.3 913.0999999999999 758.7 913.0999999999999 L765.4 913.0999999999999 L772.3 919.5" fill="none" stroke="#cfd0e0" stroke-width="2.1" stroke-linecap="round" stroke-linejoin="round" />
<path d="M764.3 914.0 L764.3 917.1999999999999 Q764.3 919.6999999999999 766.9 919.6999999999999 L771.4 919.5" fill="none" stroke="#cfd0e0" stroke-width="2.0" stroke-linecap="round" stroke-linejoin="round" />
<path d="M116.0 920.3000000000001 L119.4 924.1 L122.80000000000001 920.3000000000001" fill="none" stroke="#dedede" stroke-width="1.6" stroke-linecap="round" stroke-linejoin="round"/>
<path d="M768 968.6999999999999 L758.7 968.6999999999999 Q756.3 968.6999999999999 756.3 966.3 L756.3 952.5 Q756.3 950.0999999999999 758.7 950.0999999999999 L765.4 950.0999999999999 L772.3 956.5" fill="none" stroke="#cfd0e0" stroke-width="2.1" stroke-linecap="round" stroke-linejoin="round" />
<path d="M764.3 951.0 L764.3 954.1999999999999 Q764.3 956.6999999999999 766.9 956.6999999999999 L771.4 956.5" fill="none" stroke="#cfd0e0" stroke-width="2.0" stroke-linecap="round" stroke-linejoin="round" />
<path d="M136.0 957.3000000000001 L139.4 961.1 L142.8 957.3000000000001" fill="none" stroke="#dedede" stroke-width="1.6" stroke-linecap="round" stroke-linejoin="round"/>
<path d="M768 1005.6999999999999 L758.7 1005.6999999999999 Q756.3 1005.6999999999999 756.3 1003.3 L756.3 989.5 Q756.3 987.0999999999999 758.7 987.0999999999999 L765.4 987.0999999999999 L772.3 993.5" fill="none" stroke="#cfd0e0" stroke-width="2.1" stroke-linecap="round" stroke-linejoin="round" />
<path d="M764.3 988.0 L764.3 991.1999999999999 Q764.3 993.6999999999999 766.9 993.6999999999999 L771.4 993.5" fill="none" stroke="#cfd0e0" stroke-width="2.0" stroke-linecap="round" stroke-linejoin="round" />
<path d="M156.0 994.3000000000001 L159.4 998.1 L162.8 994.3000000000001" fill="none" stroke="#dedede" stroke-width="1.6" stroke-linecap="round" stroke-linejoin="round"/>
<path d="M768 1043.7 L758.7 1043.7 Q756.3 1043.7 756.3 1041.3 L756.3 1027.5 Q756.3 1025.1 758.7 1025.1 L765.4 1025.1 L772.3 1031.5" fill="none" stroke="#cfd0e0" stroke-width="2.1" stroke-linecap="round" stroke-linejoin="round" />
<path d="M764.3 1026.0 L764.3 1029.2 Q764.3 1031.7 766.9 1031.7 L771.4 1031.5" fill="none" stroke="#cfd0e0" stroke-width="2.0" stroke-linecap="round" stroke-linejoin="round" />
<path d="M768 1080.7 L758.7 1080.7 Q756.3 1080.7 756.3 1078.3 L756.3 1064.5 Q756.3 1062.1 758.7 1062.1 L765.4 1062.1 L772.3 1068.5" fill="none" stroke="#cfd0e0" stroke-width="2.1" stroke-linecap="round" stroke-linejoin="round" />
<path d="M764.3 1063.0 L764.3 1066.2 Q764.3 1068.7 766.9 1068.7 L771.4 1068.5" fill="none" stroke="#cfd0e0" stroke-width="2.0" stroke-linecap="round" stroke-linejoin="round" />
<path d="M768 1117.7 L758.7 1117.7 Q756.3 1117.7 756.3 1115.3 L756.3 1101.5 Q756.3 1099.1 758.7 1099.1 L765.4 1099.1 L772.3 1105.5" fill="none" stroke="#cfd0e0" stroke-width="2.1" stroke-linecap="round" stroke-linejoin="round" />
<path d="M764.3 1100.0 L764.3 1103.2 Q764.3 1105.7 766.9 1105.7 L771.4 1105.5" fill="none" stroke="#cfd0e0" stroke-width="2.0" stroke-linecap="round" stroke-linejoin="round" />
<path d="M116.0 1106.3 L119.4 1110.1000000000001 L122.80000000000001 1106.3" fill="none" stroke="#dedede" stroke-width="1.6" stroke-linecap="round" stroke-linejoin="round"/>
<path d="M768 1155.7 L758.7 1155.7 Q756.3 1155.7 756.3 1153.3 L756.3 1139.5 Q756.3 1137.1 758.7 1137.1 L765.4 1137.1 L772.3 1143.5" fill="none" stroke="#cfd0e0" stroke-width="2.1" stroke-linecap="round" stroke-linejoin="round" />
<path d="M764.3 1138.0 L764.3 1141.2 Q764.3 1143.7 766.9 1143.7 L771.4 1143.5" fill="none" stroke="#cfd0e0" stroke-width="2.0" stroke-linecap="round" stroke-linejoin="round" />
<path d="M768 1192.7 L758.7 1192.7 Q756.3 1192.7 756.3 1190.3 L756.3 1176.5 Q756.3 1174.1 758.7 1174.1 L765.4 1174.1 L772.3 1180.5" fill="none" stroke="#cfd0e0" stroke-width="2.1" stroke-linecap="round" stroke-linejoin="round" />
<path d="M764.3 1175.0 L764.3 1178.2 Q764.3 1180.7 766.9 1180.7 L771.4 1180.5" fill="none" stroke="#cfd0e0" stroke-width="2.0" stroke-linecap="round" stroke-linejoin="round" />
</svg>
</div></div>
</body></html>
